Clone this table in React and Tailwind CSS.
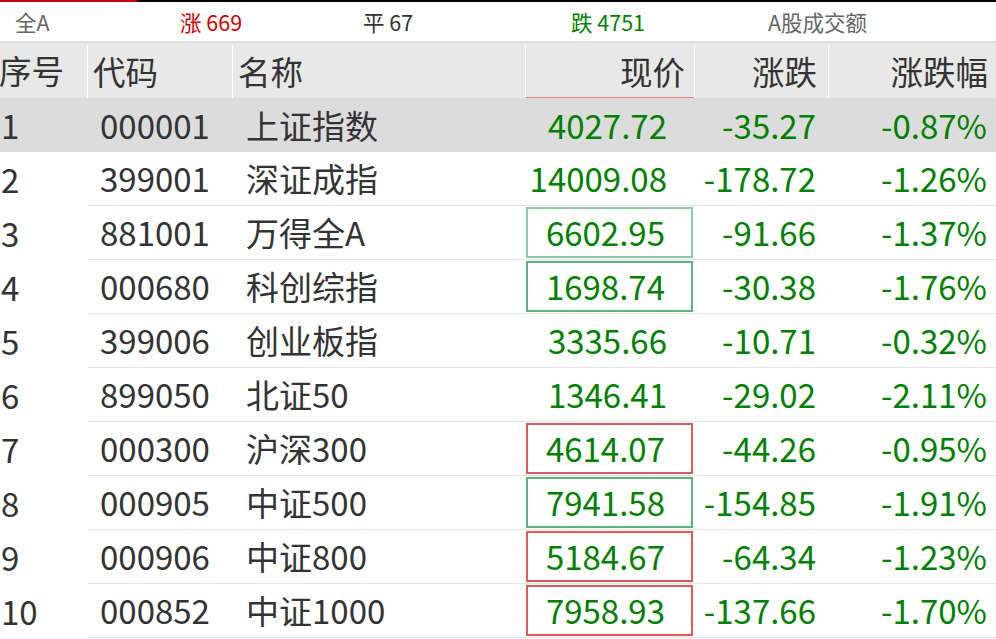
import React from 'react';

const rows = [
    { no: 1, code: '000001', name: '上证指数', price: '4027.72', chg: '-35.27', pct: '-0.87%', box: null, active: true },
    { no: 2, code: '399001', name: '深证成指', price: '14009.08', chg: '-178.72', pct: '-1.26%', box: null },
    { no: 3, code: '881001', name: '万得全A', price: '6602.95', chg: '-91.66', pct: '-1.37%', box: 'fade' },
    { no: 4, code: '000680', name: '科创综指', price: '1698.74', chg: '-30.38', pct: '-1.76%', box: 'green' },
    { no: 5, code: '399006', name: '创业板指', price: '3335.66', chg: '-10.71', pct: '-0.32%', box: null },
    { no: 6, code: '899050', name: '北证50', price: '1346.41', chg: '-29.02', pct: '-2.11%', box: null },
    { no: 7, code: '000300', name: '沪深300', price: '4614.07', chg: '-44.26', pct: '-0.95%', box: 'red' },
    { no: 8, code: '000905', name: '中证500', price: '7941.58', chg: '-154.85', pct: '-1.91%', box: 'green' },
    { no: 9, code: '000906', name: '中证800', price: '5184.67', chg: '-64.34', pct: '-1.23%', box: 'red' },
    { no: 10, code: '000852', name: '中证1000', price: '7958.93', chg: '-137.66', pct: '-1.70%', box: 'red' },
];

const boxClass = {
    fade: 'border-2 border-[#86cca4]',
    green: 'border-2 border-[#5cb37e]',
    red: 'border-2 border-[#e0595c]',
};

const App = () => {
    return (
        <div className="w-[996px] h-[639px] overflow-hidden bg-white text-[#333]" style={{ fontFamily: '"Noto Sans CJK SC", "Noto Sans", sans-serif' }}>
            {/* top strip */}
            <div className="flex h-[2px]">
                <div className="w-[137px] bg-[#c40000]" />
                <div className="flex-1 bg-black" />
            </div>

            {/* market summary tabs */}
            <div className="flex items-center h-[39px] text-[21.5px] leading-none">
                <div className="w-[180px] pl-[15px] text-[#666]">全A</div>
                <div className="w-[183px] text-[#cc0000]">涨 669</div>
                <div className="w-[208px] text-[#333]">平 67</div>
                <div className="w-[197px] text-[#008000]">跌 4751</div>
                <div className="flex-1 text-[#666]">A股成交额</div>
            </div>
            <div className="h-[2px] bg-[#dedede]" />

            {/* header */}
            <div className="flex h-[55px] bg-[#e8e8e8] text-[32.5px] leading-none">
                <div className="w-[88px] flex items-center -ml-[1px]">序号</div>
                <div className="w-[145px] flex items-center pl-[5px] border-l border-white mt-[2px]">代码</div>
                <div className="w-[293px] flex items-center pl-[5px] border-l border-white mt-[2px]">名称</div>
                <div className="w-[169px] flex items-center justify-end pr-[9px] border-l border-white mt-[2px] border-b border-b-[#f08080]">现价</div>
                <div className="w-[134px] flex items-center justify-end pr-[11px] border-l border-white mt-[2px]">涨跌</div>
                <div className="flex-1 flex items-center justify-end pr-[8px] border-l border-white mt-[2px]">涨跌幅</div>
            </div>

            {/* rows */}
            {rows.map(r => (
                <div key={r.no} className={`flex h-[54px] text-[33px] leading-none ${r.active ? 'bg-[#dcdcdc]' : ''}`}>
                    <div className="w-[88px] flex items-center pl-[1px]">{r.no}</div>
                    <div className={`flex-1 flex ${r.active ? '' : 'border-b border-[#e6e6e6]'}`}>
                        <div className="w-[145px] flex items-center pl-[12px]">{r.code}</div>
                        <div className="w-[293px] flex items-center pl-[13px]">{r.name}</div>
                        <div className="w-[169px] flex items-center py-[1px]">
                            <div className={`w-[167px] h-full flex items-center justify-end pr-[26px] text-[#008000] ${r.box ? boxClass[r.box] : ''}`}>
                                {r.price}
                            </div>
                        </div>
                        <div className="w-[134px] flex items-center justify-end pr-[13px] text-[#008000]">{r.chg}</div>
                        <div className="flex-1 flex items-center justify-end pr-[9px] text-[#008000]">{r.pct}</div>
                    </div>
                </div>
            ))}
        </div>
    );
};

export default App;
